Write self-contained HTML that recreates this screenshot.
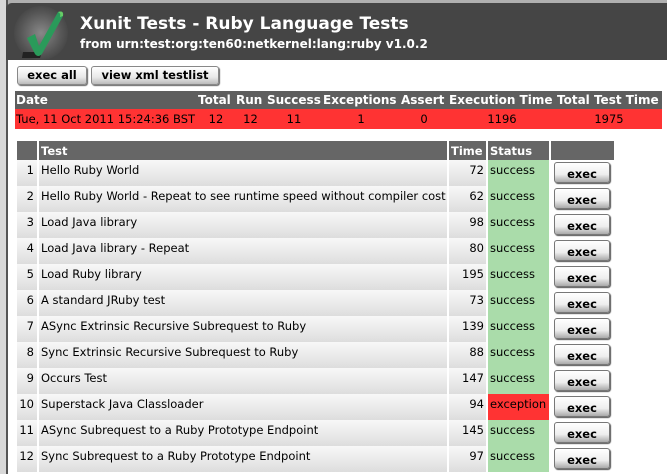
<!DOCTYPE html>
<html><head><style>
body{margin:0;width:667px;height:474px;overflow:hidden;background:#fff;font-family:"DejaVu Sans","Liberation Sans",sans-serif;font-size:11px;position:relative}
.strip{position:absolute;left:0;top:0;width:6px;height:474px;background:#d8d8d8}
.strip2{position:absolute;left:6px;top:0;width:2px;height:474px;background:#555}
.top{position:absolute;left:0;top:0;width:667px;height:4px;background:#b0b0b0}
.hdr{position:absolute;left:6px;top:3px;width:661px;height:57px;background:#454545;border-top-left-radius:6px}
.glow{position:absolute;left:14px;top:6px;width:54px;height:54px;border-radius:50%;background:radial-gradient(circle,#888 0%,#555 55%,#454545 75%)}
.t1{position:absolute;left:80px;top:14px;color:#fff;font-weight:bold;font-size:17px}
.t2{position:absolute;left:80px;top:37px;color:#fff;font-weight:bold;font-size:12px}
.btn{position:absolute;top:66px;height:17px;border:1px solid #888;border-radius:3px;background:linear-gradient(#fff,#e8e8e8 60%,#bbb);font-weight:bold;font-size:11.5px;text-align:center;line-height:17px;box-shadow:1px 1px 1px #666}
table{border-collapse:separate;border-spacing:0;position:absolute;table-layout:fixed}
.sum{left:15px;top:91px;width:647px}
.sum th{background:#5e5e5e;color:#fff;font-weight:bold;font-size:12px;height:18px;padding:0 1px;text-align:left;white-space:nowrap;overflow:hidden}
.sum td{background:#f33;height:18px;color:#000;text-align:center;white-space:nowrap;font-size:11.5px}
.res{left:17px;top:141px;width:597px;font-size:11.5px}
.res th{background:#666;color:#fff;text-align:left;height:19px;padding:0 2px;border-right:2px solid #fff;overflow:hidden;white-space:nowrap}
.res td{height:26px;vertical-align:top;padding:3px 2px 0;box-sizing:border-box;background:linear-gradient(#f8f8f8,#ddd);border-right:2px solid #fff;white-space:nowrap;overflow:hidden}
.res td.n{text-align:right;padding-right:3px}
.res td.tm{text-align:right}
.res td.s{background:#aadcaa}
.res td.x{background:#f33}
.res td.e{padding:2px 0 0 3px;background:#fff;border-right:0}
.eb{width:54px;height:19px;border:1px solid #777;border-radius:3px;background:linear-gradient(#fff,#eee 60%,#aaa);box-shadow:1px 1px 1px #555;font-weight:bold;text-align:center;line-height:22px}
</style></head><body>
<div class="top"></div>
<div class="strip"></div><div class="strip2"></div>
<div class="hdr"></div>
<div class="glow"></div>
<svg style="position:absolute;left:18px;top:8px" width="50" height="50" viewBox="0 0 50 50">
<path d="M5 44 L24 44 L22 50 L4 50 Z" fill="#222"/>
<path d="M9 30 L17 26 L21 38 L40 4 Q46 2 45 8 L24 46 Q20 50 17 46 Z" fill="#2a9a5a"/>
<path d="M40 4 Q46 2 45 8 L42 9 Q43 5 40 4Z" fill="#6c6"/>
</svg>
<div class="t1">Xunit Tests - Ruby Language Tests</div>
<div class="t2">from urn:test:org:ten60:netkernel:lang:ruby v1.0.2</div>
<div class="btn" style="left:17px;width:68px">exec all</div>
<div class="btn" style="left:91px;width:126px">view xml testlist</div>
<table class="sum"><colgroup><col style="width:182px"><col style="width:38px"><col style="width:31px"><col style="width:56px"><col style="width:78px"><col style="width:48px"><col style="width:108px"><col style="width:106px"></colgroup>
<tr><th>Date</th><th>Total</th><th>Run</th><th>Success</th><th>Exceptions</th><th>Assert</th><th>Execution Time</th><th>Total Test Time</th></tr>
<tr><td style="text-align:left">Tue, 11 Oct 2011 15:24:36 BST</td><td>12</td><td>12</td><td>11</td><td>1</td><td>0</td><td>1196</td><td>1975</td></tr></table>
<table class="res"><colgroup><col style="width:22px"><col style="width:410px"><col style="width:39px"><col style="width:63px"><col style="width:63px"></colgroup>
<tr><th></th><th>Test</th><th>Time</th><th>Status</th><th style="border-right:0"></th></tr>
<tr><td class="n">1</td><td>Hello Ruby World</td><td class="tm">72</td><td class="s">success</td><td class="e"><div class="eb">exec</div></td></tr>
<tr><td class="n">2</td><td>Hello Ruby World - Repeat to see runtime speed without compiler cost</td><td class="tm">62</td><td class="s">success</td><td class="e"><div class="eb">exec</div></td></tr>
<tr><td class="n">3</td><td>Load Java library</td><td class="tm">98</td><td class="s">success</td><td class="e"><div class="eb">exec</div></td></tr>
<tr><td class="n">4</td><td>Load Java library - Repeat</td><td class="tm">80</td><td class="s">success</td><td class="e"><div class="eb">exec</div></td></tr>
<tr><td class="n">5</td><td>Load Ruby library</td><td class="tm">195</td><td class="s">success</td><td class="e"><div class="eb">exec</div></td></tr>
<tr><td class="n">6</td><td>A standard JRuby test</td><td class="tm">73</td><td class="s">success</td><td class="e"><div class="eb">exec</div></td></tr>
<tr><td class="n">7</td><td>ASync Extrinsic Recursive Subrequest to Ruby</td><td class="tm">139</td><td class="s">success</td><td class="e"><div class="eb">exec</div></td></tr>
<tr><td class="n">8</td><td>Sync Extrinsic Recursive Subrequest to Ruby</td><td class="tm">88</td><td class="s">success</td><td class="e"><div class="eb">exec</div></td></tr>
<tr><td class="n">9</td><td>Occurs Test</td><td class="tm">147</td><td class="s">success</td><td class="e"><div class="eb">exec</div></td></tr>
<tr><td class="n">10</td><td>Superstack Java Classloader</td><td class="tm">94</td><td class="s x">exception</td><td class="e"><div class="eb">exec</div></td></tr>
<tr><td class="n">11</td><td>ASync Subrequest to a Ruby Prototype Endpoint</td><td class="tm">145</td><td class="s">success</td><td class="e"><div class="eb">exec</div></td></tr>
<tr><td class="n">12</td><td>Sync Subrequest to a Ruby Prototype Endpoint</td><td class="tm">97</td><td class="s">success</td><td class="e"><div class="eb">exec</div></td></tr>
</table>
</body></html>
